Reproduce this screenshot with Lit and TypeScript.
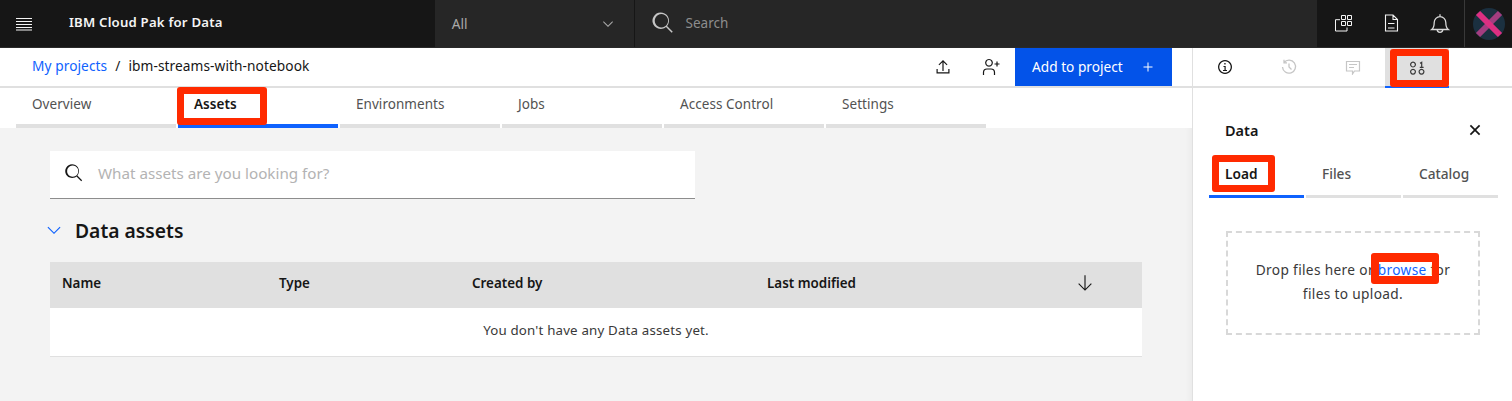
import { LitElement, html, css, svg } from "lit";
import { customElement } from "lit/decorators.js";

const ic = (size: number, body: unknown, vb = "0 0 32 32") => html`<svg width=${size} height=${size} viewBox=${vb} fill="currentColor">${body}</svg>`;
const searchP = svg`<path d="M29 27.6l-7.6-7.6a11 11 0 1 0-1.4 1.4l7.6 7.6zM5 13a8.9 8.9 0 1 1 0 .01z"/>`;

@customElement("app-root")
export class AppRoot extends LitElement {
  static styles = css`
    :host { display: block; width: 1512px; height: 401px; overflow: hidden; position: relative; background: #f3f3f3;
      font-family: "Noto Sans", "Open Sans", sans-serif; font-size: 13.7px; color: #161616; letter-spacing: 0; }
    * { box-sizing: border-box; }
    .hdr { height: 48px; background: #161616; color: #f4f4f4; display: flex; align-items: stretch; border-bottom: 1px solid #2a2a2a; }
    .menu { width: 48px; display: flex; align-items: center; justify-content: center; }
    .brand { width: 387px; padding-left: 21px; font-weight: 600; font-size: 13.2px; display: flex; align-items: center; padding-bottom: 3px; letter-spacing: .2px; }
    .scope { width: 200px; background: #262626; color: #a8a8a8; display: flex; align-items: center; justify-content: space-between; padding: 0 18px 0 17px; border-right: 1px solid #161616; }
    .search { width: 683px; background: #262626; color: #8d8d8d; display: flex; align-items: center; padding-left: 16px; gap: 11px; padding-bottom: 2px; font-size: 13.5px; }
    .search svg { color: #c6c6c6; }
    .hicons { flex: 1; display: flex; align-items: center; }
    .hi { width: 49px; display: flex; justify-content: center; color: #f4f4f4; }
    .avatar { width: 48px; height: 47px; border-left: 1px solid #393939; display: flex; align-items: center; justify-content: center; }
    .body { display: flex; height: 353px; }
    .main { width: 1192px; display: flex; flex-direction: column; }
    .crumbs { height: 40px; background: #fff; border-bottom: 2px solid #e0e0e0; display: flex; align-items: stretch; padding-left: 32px; }
    .path { flex: 1; display: flex; align-items: center; gap: 8px; padding-bottom: 4px; letter-spacing: .08px; }
    .link { color: #0f62fe; }
    .acts { display: flex; align-items: center; }
    .act { width: 48px; display: flex; justify-content: center; color: #161616; }
    .add { width: 157px; height: 38px; background: #0353e9; color: #fff; display: flex; align-items: center; justify-content: space-between; padding: 0 17px 1px 17px; margin-right: 20px; }
    .tabs { height: 40px; background: #fff; display: flex; gap: 2px; padding-left: 16px; font-size: 13.5px; }
    .tab { width: 160px; border-bottom: 4px solid #e0e0e0; padding: 7px 0 0 16px; color: #525252; letter-spacing: .05px; }
    .tab.on { border-color: #0f62fe; color: #161616; font-weight: 600; }
    .content { flex: 1; padding: 23px 50px 0; box-shadow: inset -8px 0 8px -8px rgba(0,0,0,.06); }
    .find { width: 645px; height: 48px; background: #fff; border-bottom: 1px solid #8d8d8d; display: flex; align-items: center; padding: 0 0 3px 14px; gap: 14px; color: #b3b3b3; font-size: 15.2px; }
    .find svg { color: #161616; }
    .sec { display: flex; align-items: center; height: 63px; gap: 13px; margin-left: -4px; font-size: 19.3px; font-weight: 600; padding-bottom: 1px; }
    .sec svg { color: #0f62fe; }
    .thead { height: 46px; background: #e0e0e0; display: grid; grid-template-columns: 217px 193px 295px 1fr 66px; align-items: center; padding: 0 0 4px 12px; font-weight: 600; font-size: 13.4px; }
    .thead svg { display: block; }
    .empty { height: 49px; background: #fff; border-bottom: 1px solid #e0e0e0; display: flex; align-items: center; justify-content: center; color: #393939; padding-bottom: 5px; font-size: 13.3px; letter-spacing: .18px; }
    .panel { width: 320px; background: #fff; border-left: 1px solid #e0e0e0; display: flex; flex-direction: column; }
    .ptabs { height: 40px; border-bottom: 2px solid #e0e0e0; display: flex; }
    .pt { width: 64px; display: flex; align-items: center; justify-content: center; color: #161616; }
    .pt.off { color: #c6c6c6; }
    .pt.on { background: #e0e0e0; box-shadow: inset 0 -2px 0 #0f62fe; height: 40px; color: #393939; }
    .ptitle { display: flex; justify-content: space-between; align-items: center; padding: 28px 31px 0 32px; font-weight: 600; height: 56px; font-size: 14.5px; }
    .ltabs { display: flex; gap: 2px; margin: 19px 0 0 16px; }
    .lt { width: 95px; height: 35px; border-bottom: 3px solid #e0e0e0; color: #525252; font-weight: 500; padding: 1px 0 0 16px; }
    .lt.on { border-color: #0f62fe; color: #161616; font-weight: 600; }
    .drop { width: 254px; height: 104px; margin: 33px 0 0 33px; border: 2px dashed #d8d8d8; display: flex; align-items: center; justify-content: center; text-align: center; line-height: 24px; padding: 0 20px 2px; color: #393939; letter-spacing: .34px; }
    .mark { position: absolute; border: 7px solid #ff2a00; border-radius: 3px; pointer-events: none; }
    .m1 { left: 177px; top: 87px; width: 90px; height: 38px; }
    .m2 { left: 1390px; top: 49px; width: 59px; height: 38px; }
    .m3 { left: 1212px; top: 155px; width: 63px; height: 37px; }
    .m4 { left: 1371px; top: 253px; width: 68px; height: 31px; border-width: 9px 7px 8px 8px; }
  `;

  render() {
    return html`
      <div class="hdr">
        <div class="menu">${ic(20, svg`<path d="M2 4h16v1H2zM2 7h16v1H2zM2 10h16v1H2zM2 13h16v1H2zM2 15.5h16v1H2z"/>`, "0 0 20 20")}</div>
        <div class="brand">IBM Cloud Pak for Data</div>
        <div class="scope"><span>All</span>${ic(16, svg`<path d="M8 11L3 6l.7-.7L8 9.600l4.300-4.300.7.700z"/>`, "0 0 16 16")}</div>
        <div class="search">${ic(24, searchP)}<span>Search</span></div>
        <div class="hicons">
          <div class="hi">${ic(20, svg`<path fill="none" stroke="currentColor" stroke-width="1" d="M9.500 1.500h4v4h-4zM15.500 1.500h4v4h-4zM9.500 7.500h4v4h-4zM15.500 7.500h4v4h-4zM8 5.700H3.500V17H15v-3.500"/>`, "0 0 20 20")}</div>
          <div class="hi">${ic(20, svg`<path fill="none" stroke="currentColor" stroke-width="1.100" d="M4.500 1H12l4.500 4.500V17h-12zM12 1v4.500h4.500M7 9.500h6.500M7 14h6.500"/>`, "0 0 20 20")}</div>
          <div class="hi">${ic(22, svg`<path fill="none" stroke="#d8d8d8" stroke-width="1.300" d="M2.700 16.500c2-1.500 2.500-3.500 2.500-7a5.800 5.800 0 0 1 11.600 0c0 3.500.5 5.500 2.500 7zM8.200 16.500a2.800 2.800 0 0 0 5.600 0M11 1.300v2.400"/>`, "0 0 22 22")}</div>
          <div class="avatar"><svg width="32" height="32" viewBox="0 0 32 32"><circle cx="16" cy="16" r="16" fill="#1b3040"/><path d="M27 5L5 27" stroke="#a33d80" stroke-width="6"/><path d="M5 5L27 27" stroke="#dc2f82" stroke-width="6"/></svg></div>
        </div>
      </div>
      <div class="body">
        <div class="main">
          <div class="crumbs">
            <div class="path"><span class="link">My projects</span><span>/</span><span>ibm-streams-with-notebook</span></div>
            <div class="acts">
              <div class="act">${ic(18, svg`<path d="M9 2L4.500 6.500l.8.800L8.400 4.200V13h1.200V4.200l3.100 3.100.8-.8zM2.500 11v4.500h13V11h-1.200v3.300H3.700V11z"/>`, "0 0 18 18")}</div>
              <div class="act">${ic(20, svg`<path fill="none" stroke="currentColor" stroke-width="1.200" d="M8 2.500a3.300 3.300 0 1 0 .01 0zM2.500 18v-2.500a3.500 3.500 0 0 1 3.500-3.500h4a3.500 3.500 0 0 1 3.500 3.500V18M16 4.500v5M13.500 7h5"/>`, "0 0 20 20")}</div>
              <div class="add"><span>Add to project</span>${ic(14, svg`<path d="M7.500 2.500h-1v4h-4v1h4v4h1v-4h4v-1h-4z"/>`, "0 0 14 14")}</div>
            </div>
          </div>
          <div class="tabs">
            <div class="tab">Overview</div><div class="tab on">Assets</div><div class="tab">Environments</div>
            <div class="tab">Jobs</div><div class="tab">Access Control</div><div class="tab">Settings</div>
          </div>
          <div class="content">
            <div class="find">${ic(20, searchP)}<span>What assets are you looking for?</span></div>
            <div class="sec">${ic(16, svg`<path d="M8 12L1.500 5.500l.8-.8L8 10.400l5.700-5.700.8.800z"/>`, "0 0 16 16")}<span>Data assets</span></div>
            <div class="thead"><span>Name</span><span>Type</span><span>Created by</span><span>Last modified</span>${ic(18, svg`<path d="M8.500 1h-1v12L2.700 8.200l-.7.700 6 6 6-6-.7-.7L8.500 13z"/>`, "0 0 16 16")}</div>
            <div class="empty">You don't have any Data assets yet.</div>
          </div>
        </div>
        <div class="panel">
          <div class="ptabs">
            <div class="pt">${ic(16, svg`<path d="M8 1a7 7 0 1 0 .01 0zm0 1.300a5.700 5.700 0 1 1-.01 0zM7.300 4h1.300v1.500H7.300zM6.500 7h2.200v4H10v1H6v-1h1.500V8h-1z"/>`, "0 0 16 16")}</div>
            <div class="pt off">${ic(16, svg`<path fill="none" stroke="currentColor" stroke-width="1.300" d="M3 3.500A6.500 6.500 0 1 1 1.500 8M3 .8v3h3M8 4.500V8l2.500 2.500"/>`, "0 0 16 16")}</div>
            <div class="pt off">${ic(16, svg`<path fill="none" stroke="currentColor" stroke-width="1.200" d="M1.500 2.500h13v9.500H9.500L7.500 15v-3h-6zM4 5.500h8M4 8.500h5"/>`, "0 0 16 16")}</div>
            <div class="pt on">${ic(16, svg`<path fill="none" stroke="currentColor" stroke-width="1.200" d="M4 2.200a2.400 2.400 0 1 0 .01 0zM4 9.300a2.400 2.400 0 1 0 .01 0zM12.500 9.300a2.400 2.400 0 1 0 .01 0zM11 3.200L12.700 2.300v5M10.800 7.300h3.800"/>`, "0 0 16 16")}</div>
          </div>
          <div class="ptitle"><span>Data</span>${ic(12, svg`<path d="M2 .8L6 4.800 10 .8 11.200 2l-4 4 4 4L10 11.200l-4-4-4 4L.8 10l4-4-4-4z"/>`, "0 0 12 12")}</div>
          <div class="ltabs"><div class="lt on">Load</div><div class="lt">Files</div><div class="lt">Catalog</div></div>
          <div class="drop"><div>Drop files here or <span class="link">browse</span> for files to upload.</div></div>
        </div>
      </div>
      <div class="mark m1"></div><div class="mark m2"></div><div class="mark m3"></div><div class="mark m4"></div>
    `;
  }
}
